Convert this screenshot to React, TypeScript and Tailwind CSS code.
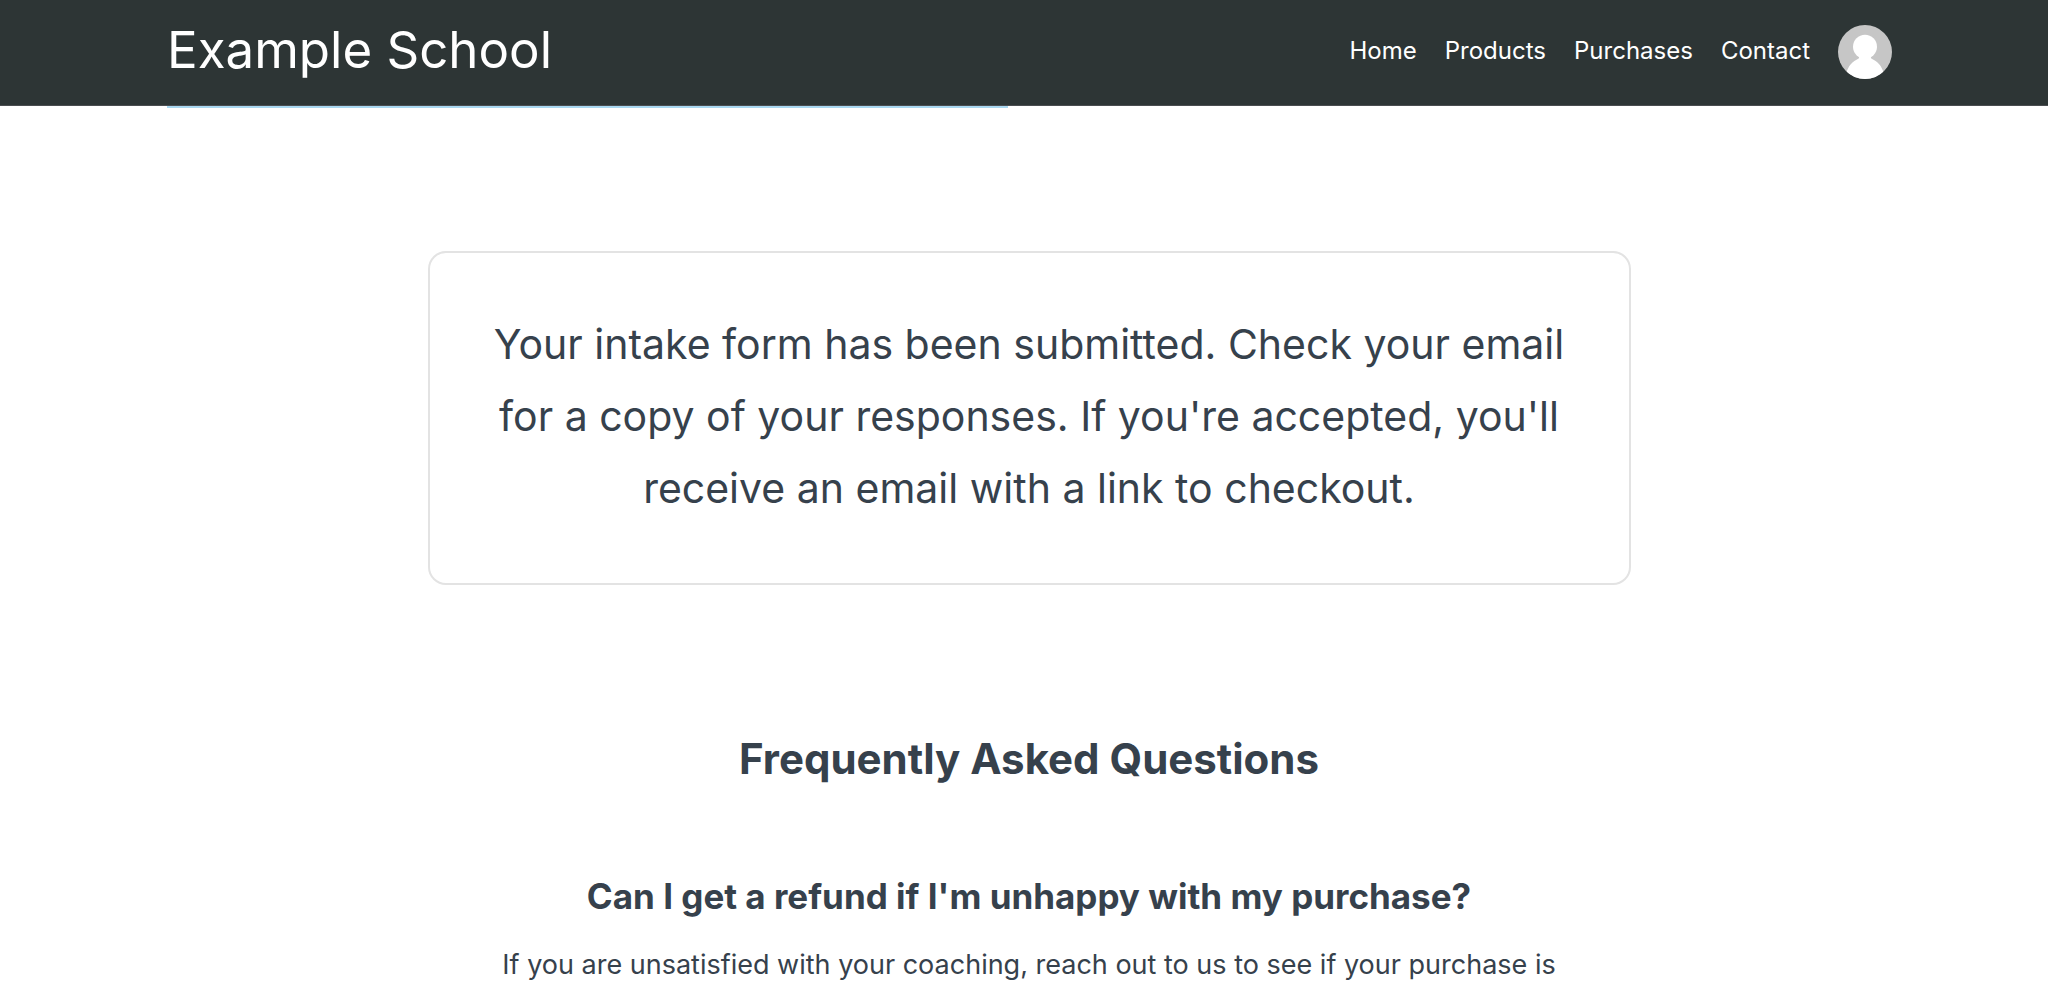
const navLinks = ["Home", "Products", "Purchases", "Contact"];

function Avatar() {
  return (
    <svg viewBox="0 0 54 54" className="size-[54px] rounded-full" aria-hidden="true">
      <rect width="54" height="54" fill="#c6c6c6" />
      <circle cx="27" cy="21.8" r="12" fill="#fff" />
      <path
        fill="#fff"
        d="M21 31.5 C21.5 33.3 20.5 33.8 18.5 34.8 C12.5 38 9 43.5 8 50 L8 54 L46 54 L46 50 C45 43.5 41.5 38 35.5 34.8 C33.5 33.8 32.5 33.3 33 31.5 Z"
      />
    </svg>
  );
}

export default function App() {
  return (
    <div className="min-h-screen bg-white font-['Metropolis','Inter',sans-serif] text-[#36414c]">
      <header className="border-b border-[#4a4d50] bg-[#2d3535] pt-[25px] pr-[156px] pb-[26px] pl-[167px] text-white">
        <div className="flex items-center justify-between">
          <a href="#" className="pb-1 text-[51px] leading-[50px]">
            Example School
          </a>
          <nav aria-label="Main" className="flex items-center gap-7">
            {navLinks.map((label) => (
              <a key={label} href={"#" + label.toLowerCase()} className="pb-0.5 text-2xl">
                {label}
              </a>
            ))}
            <button type="button" aria-label="Account" className="rounded-full">
              <Avatar />
            </button>
          </nav>
        </div>
      </header>

      <div className="pr-[156px] pl-[167px]">
        <div className="h-0.5 w-[841px] max-w-full bg-[#a9d8f1]" />
      </div>

      <main className="flex flex-col items-center pt-[143px] pl-2.5 text-center">
        <section className="w-full max-w-[1203px] rounded-[18px] border-2 border-[#e3e3e3] px-[60px] pt-[55px] pb-[59px]">
          <p className="text-[41px] leading-[72px]">
            Your intake form has been submitted. Check your email for a copy of your responses. If
            you're accepted, you'll receive an email with a link to checkout.
          </p>
        </section>

        <section className="mt-36 w-full max-w-[1078px]">
          <h2 className="text-[42px] leading-[60px] font-bold">Frequently Asked Questions</h2>
          <h3 className="mt-[83px] text-[35px] leading-[48px] font-bold">
            Can I get a refund if I'm unhappy with my purchase?
          </h3>
          <p className="mt-[21px] text-[27px] leading-[48px]">
            If you are unsatisfied with your coaching, reach out to us to see if your purchase is
          </p>
        </section>
      </main>
    </div>
  );
}
